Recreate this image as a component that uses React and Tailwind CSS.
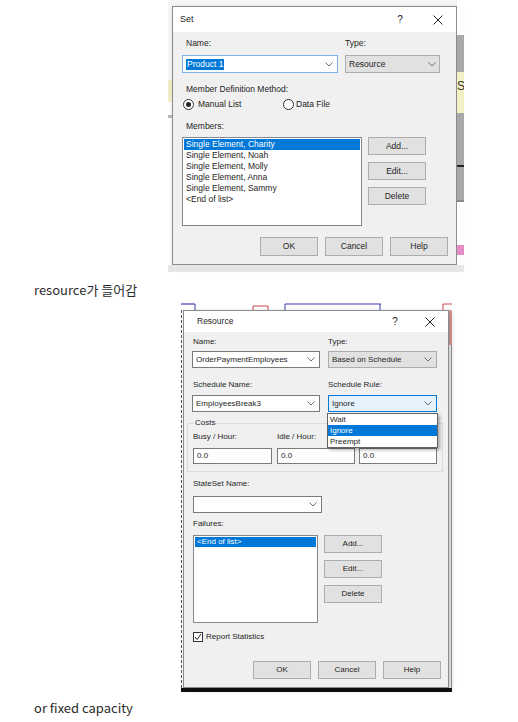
import React from 'react';

const Chevron = () => (
  <svg width="8" height="5" viewBox="0 0 8 5" className="shrink-0">
    <polyline points="0.5,0.5 4,4 7.5,0.5" fill="none" stroke="#6e6e6e" strokeWidth="1" />
  </svg>
);

const CloseX = () => (
  <svg width="10" height="10" viewBox="0 0 10 10">
    <line x1="0.5" y1="0.5" x2="9.5" y2="9.5" stroke="#222" strokeWidth="1" />
    <line x1="9.5" y1="0.5" x2="0.5" y2="9.5" stroke="#222" strokeWidth="1" />
  </svg>
);

const Btn = ({ children, className = '' }) => (
  <div className={`flex items-center justify-center w-[58px] bg-[#e1e1e1] border border-[#adadad] text-[#1e1e1e] ${className}`}>
    {children}
  </div>
);

const Radio = ({ checked }) => (
  <span className="w-[11px] h-[11px] rounded-full border border-[#333] bg-white flex items-center justify-center shrink-0">
    {checked && <span className="w-[5px] h-[5px] rounded-full bg-[#222]" />}
  </span>
);

const TitleBar = ({ title, className, qGap }) => (
  <div className={`flex items-center bg-white text-[#1e1e1e] ${className}`}>
    <span>{title}</span>
    <div className={`ml-auto flex items-center pr-[8px] ${qGap}`}>
      <span className="w-[20px] text-center text-[10px]">?</span>
      <span className="w-[20px] flex justify-center"><CloseX /></span>
    </div>
  </div>
);

const SetDialog = () => (
  <div className="w-[285px] h-[259px] border border-[#8c8c8c] bg-[#f0f0f0] shadow-[2px_2px_5px_rgba(0,0,0,0.25)] flex flex-col text-[8.5px]">
    <TitleBar title="Set" className="h-[25px] pl-[7px] text-[9px]" qGap="gap-[18px]" />
    <div className="flex flex-col pl-[9px] pr-[8px]">
      <div className="mt-[6px] h-[10px] leading-[10px] flex">
        <span className="w-[163px] pl-[4px]">Name:</span>
        <span>Type:</span>
      </div>
      <div className="mt-[7px] h-[18px] flex gap-[7px]">
        <div className="w-[156px] flex items-center justify-between bg-white border border-[#7eb4ea] pl-[3px] pr-[4px]">
          <span className="bg-[#0078d7] text-white leading-[11px] px-[1px]">Product 1</span>
          <Chevron />
        </div>
        <div className="w-[95px] flex items-center justify-between bg-[#e1e1e1] border border-[#adadad] pl-[3px] pr-[3px]">
          <span>Resource</span>
          <Chevron />
        </div>
      </div>
      <div className="mt-[11px] h-[10px] leading-[10px] pl-[4px]">Member Definition Method:</div>
      <div className="mt-[5px] h-[10px] flex items-center">
        <div className="w-[101px] flex items-center gap-[4px] pl-[1px]">
          <Radio checked />
          <span>Manual List</span>
        </div>
        <div className="flex items-center gap-[2px]">
          <Radio />
          <span>Data File</span>
        </div>
      </div>
      <div className="mt-[12px] h-[10px] leading-[10px] pl-[4px]">Members:</div>
      <div className="mt-[6px] flex gap-[6px]">
        <div className="w-[180px] h-[89px] bg-white border border-[#828790] p-[1px] flex flex-col">
          <div className="h-[11px] leading-[11px] px-[2px] bg-[#0078d7] text-white">Single Element, Charity</div>
          <div className="h-[11px] leading-[11px] px-[2px]">Single Element, Noah</div>
          <div className="h-[11px] leading-[11px] px-[2px]">Single Element, Molly</div>
          <div className="h-[11px] leading-[11px] px-[2px]">Single Element, Anna</div>
          <div className="h-[11px] leading-[11px] px-[2px]">Single Element, Sammy</div>
          <div className="h-[11px] leading-[11px] px-[2px]">&lt;End of list&gt;</div>
        </div>
        <div className="flex flex-col gap-[7px]">
          <Btn className="h-[18px]">Add...</Btn>
          <Btn className="h-[18px]">Edit...</Btn>
          <Btn className="h-[18px]">Delete</Btn>
        </div>
      </div>
      <div className="mt-[11px] flex justify-end gap-[7px]">
        <Btn className="h-[19px] border-[#0078d7]">OK</Btn>
        <Btn className="h-[19px]">Cancel</Btn>
        <Btn className="h-[19px]">Help</Btn>
      </div>
    </div>
  </div>
);

const Field = ({ children, className = '' }) => (
  <div className={`h-[16px] flex items-center bg-white border border-[#7a7a7a] pl-[3px] ${className}`}>{children}</div>
);

const ResourceDialog = () => (
  <div className="relative w-[266px] h-[378px] border border-[#8c8c8c] bg-[#f0f0f0] shadow-[2px_2px_5px_rgba(0,0,0,0.25)] flex flex-col text-[8px]">
    <TitleBar title="Resource" className="h-[21px] pl-[13px] text-[8.5px]" qGap="gap-[15px]" />
    <div className="flex flex-col pl-[8px] pr-[7px]">
      <div className="mt-[5px] h-[10px] leading-[10px] flex">
        <span className="w-[136px] pl-[1px]">Name:</span>
        <span>Type:</span>
      </div>
      <div className="mt-[4px] h-[17px] flex gap-[8px]">
        <div className="w-[128px] flex items-center justify-between bg-white border border-[#7a7a7a] pl-[3px] pr-[4px]">
          <span>OrderPaymentEmployees</span>
          <Chevron />
        </div>
        <div className="w-[109px] flex items-center justify-between bg-[#e1e1e1] border border-[#adadad] pl-[3px] pr-[4px]">
          <span>Based on Schedule</span>
          <Chevron />
        </div>
      </div>
      <div className="mt-[12px] h-[10px] leading-[10px] flex">
        <span className="w-[136px] pl-[1px]">Schedule Name:</span>
        <span>Schedule Rule:</span>
      </div>
      <div className="mt-[5px] h-[17px] flex gap-[8px]">
        <div className="w-[128px] flex items-center justify-between bg-white border border-[#7a7a7a] pl-[3px] pr-[4px]">
          <span>EmployeesBreak3</span>
          <Chevron />
        </div>
        <div className="w-[109px] flex items-center justify-between bg-[#e5f1fb] border border-[#0078d7] pl-[3px] pr-[4px]">
          <span>Ignore</span>
          <Chevron />
        </div>
      </div>
      <fieldset className="mt-[6px] ml-[-5px] w-[256px] border border-[#dcdcdc] pl-[5px] pb-[7px]">
        <legend className="ml-[1px] px-[1px] h-[10px] leading-[10px]">Costs</legend>
        <div className="mt-[4px] h-[10px] leading-[10px] flex">
          <span className="w-[84px]">Busy / Hour:</span>
          <span className="w-[82px]">Idle / Hour:</span>
          <span>Per Use:</span>
        </div>
        <div className="mt-[6px] flex">
          <Field className="w-[79px]">0.0</Field>
          <Field className="w-[78px] ml-[5px]">0.0</Field>
          <Field className="w-[78px] ml-[4px]">0.0</Field>
        </div>
      </fieldset>
      <div className="mt-[7px] h-[10px] leading-[10px] pl-[1px]">StateSet Name:</div>
      <div className="mt-[7px] ml-[1px] w-[129px] h-[17px] flex items-center justify-end bg-white border border-[#7a7a7a] pr-[4px]">
        <Chevron />
      </div>
      <div className="mt-[6px] h-[10px] leading-[10px] pl-[1px]">Failures:</div>
      <div className="mt-[6px] ml-[1px] flex gap-[6px]">
        <div className="w-[125px] h-[88px] bg-white border border-[#828790] p-[1px]">
          <div className="h-[10px] leading-[10px] px-[2px] bg-[#0078d7] text-white">&lt;End of list&gt;</div>
        </div>
        <div className="flex flex-col gap-[7px]">
          <Btn className="h-[18px]">Add...</Btn>
          <Btn className="h-[18px]">Edit...</Btn>
          <Btn className="h-[18px]">Delete</Btn>
        </div>
      </div>
      <div className="mt-[9px] ml-[1px] h-[10px] flex items-center gap-[3px]">
        <span className="w-[10px] h-[10px] border border-[#333] bg-white flex items-center justify-center">
          <svg width="8" height="8" viewBox="0 0 8 8">
            <polyline points="1,4 3,6.5 7,1" fill="none" stroke="#222" strokeWidth="1" />
          </svg>
        </span>
        <span>Report Statistics</span>
      </div>
      <div className="mt-[19px] flex justify-end gap-[7px]">
        <Btn className="h-[18px] border-[#0078d7]">OK</Btn>
        <Btn className="h-[18px]">Cancel</Btn>
        <Btn className="h-[18px]">Help</Btn>
      </div>
    </div>

    {/* open Schedule Rule list */}
    <div className="absolute left-[143px] top-[102px] w-[111px] h-[35px] bg-white border border-[#646464] shadow-[2px_2px_3px_rgba(0,0,0,0.3)] flex flex-col">
      <div className="h-[11px] leading-[11px] pl-[2px]">Wait</div>
      <div className="h-[11px] leading-[11px] pl-[2px] bg-[#0078d7] text-white">Ignore</div>
      <div className="h-[11px] leading-[11px] pl-[2px]">Preempt</div>
    </div>
  </div>
);

const DiagramTop = () => (
  <svg width="271" height="7" viewBox="0 0 271 7" className="block">
    <line x1="0" y1="1" x2="14" y2="1" stroke="#3b3bb3" strokeWidth="1.2" />
    <line x1="14" y1="1" x2="14" y2="7" stroke="#3b3bb3" strokeWidth="1" />
    <line x1="104" y1="1" x2="200" y2="1" stroke="#3b3bb3" strokeWidth="1.2" />
    <line x1="104" y1="1" x2="104" y2="7" stroke="#3b3bb3" strokeWidth="1" />
    <line x1="199" y1="1" x2="199" y2="7" stroke="#3b3bb3" strokeWidth="1" />
    <polyline points="72,7 72,3 87,3 87,7" fill="none" stroke="#d04848" strokeWidth="1" />
    <polyline points="262,7 262,1 271,1" fill="none" stroke="#d04848" strokeWidth="1" />
  </svg>
);

export default function App() {
  return (
    <div className="w-[518px] h-[722px] bg-white overflow-hidden flex flex-col font-['Liberation_Sans',Arial,sans-serif] text-[#1e1e1e]">
      {/* first screenshot */}
      <div className="ml-[168px] w-[296px] h-[272px] flex">
        <div className="w-[4px] flex flex-col">
          <div className="h-[80px] bg-[#f7f7f7]" />
          <div className="h-[22px] bg-[#f2efc8]" />
          <div className="h-[13px] bg-white" />
          <div className="h-[3px] bg-[#b8b8b8]" />
          <div className="flex-1 bg-white" />
          <div className="h-[7px] bg-[#e6e6e6]" />
        </div>
        <div className="w-[285px] flex flex-col">
          <div className="h-[6px] bg-[#f7f7f7]" />
          <SetDialog />
          <div className="h-[7px] bg-[#e6e6e6]" />
        </div>
        <div className="w-[7px] flex flex-col overflow-hidden">
          <div className="h-[35px] bg-white" />
          <div className="h-[37px] bg-[#a8a8a8]" />
          <div className="h-[41px] bg-[#f3f0c4] overflow-hidden text-[12px] leading-[16px] pt-[6px] text-[#333] whitespace-nowrap">Se</div>
          <div className="h-[52px] bg-[#a8a8a8]" />
          <div className="h-[2px] bg-[#222]" />
          <div className="h-[33px] bg-[#a8a8a8]" />
          <div className="h-[2px] bg-[#8a8a8a]" />
          <div className="h-[43px] bg-white" />
          <div className="h-[10px] bg-[#e48ac4]" />
          <div className="flex-1 bg-white" />
          <div className="h-[7px] bg-[#e6e6e6]" />
        </div>
      </div>

      <p className="mt-[9px] ml-[34px] h-[18px] leading-[18px] text-[13px] text-[#2b2b2b] font-['Noto_Sans_CJK_KR',sans-serif]">
        resource가 들어감
      </p>

      {/* second screenshot */}
      <div className="mt-[4px] ml-[181px] w-[271px] h-[389px] flex flex-col bg-white">
        <DiagramTop />
        <div className="flex">
          <div className="w-[2px] h-[378px] border-l border-[#555] border-dashed" />
          <ResourceDialog />
          <div className="w-[3px] h-[378px] flex flex-col">
            <div className="h-[35px] bg-[#e3a0a0]" />
            <div className="flex-1 border-r border-[#9a9a9a]" />
          </div>
        </div>
        <div className="h-[4px] bg-[#111]" />
      </div>

      <p className="mt-[7px] ml-[34px] h-[18px] leading-[18px] text-[13px] text-[#2b2b2b] font-['Noto_Sans_CJK_KR',sans-serif]">
        or fixed capacity
      </p>
    </div>
  );
}
